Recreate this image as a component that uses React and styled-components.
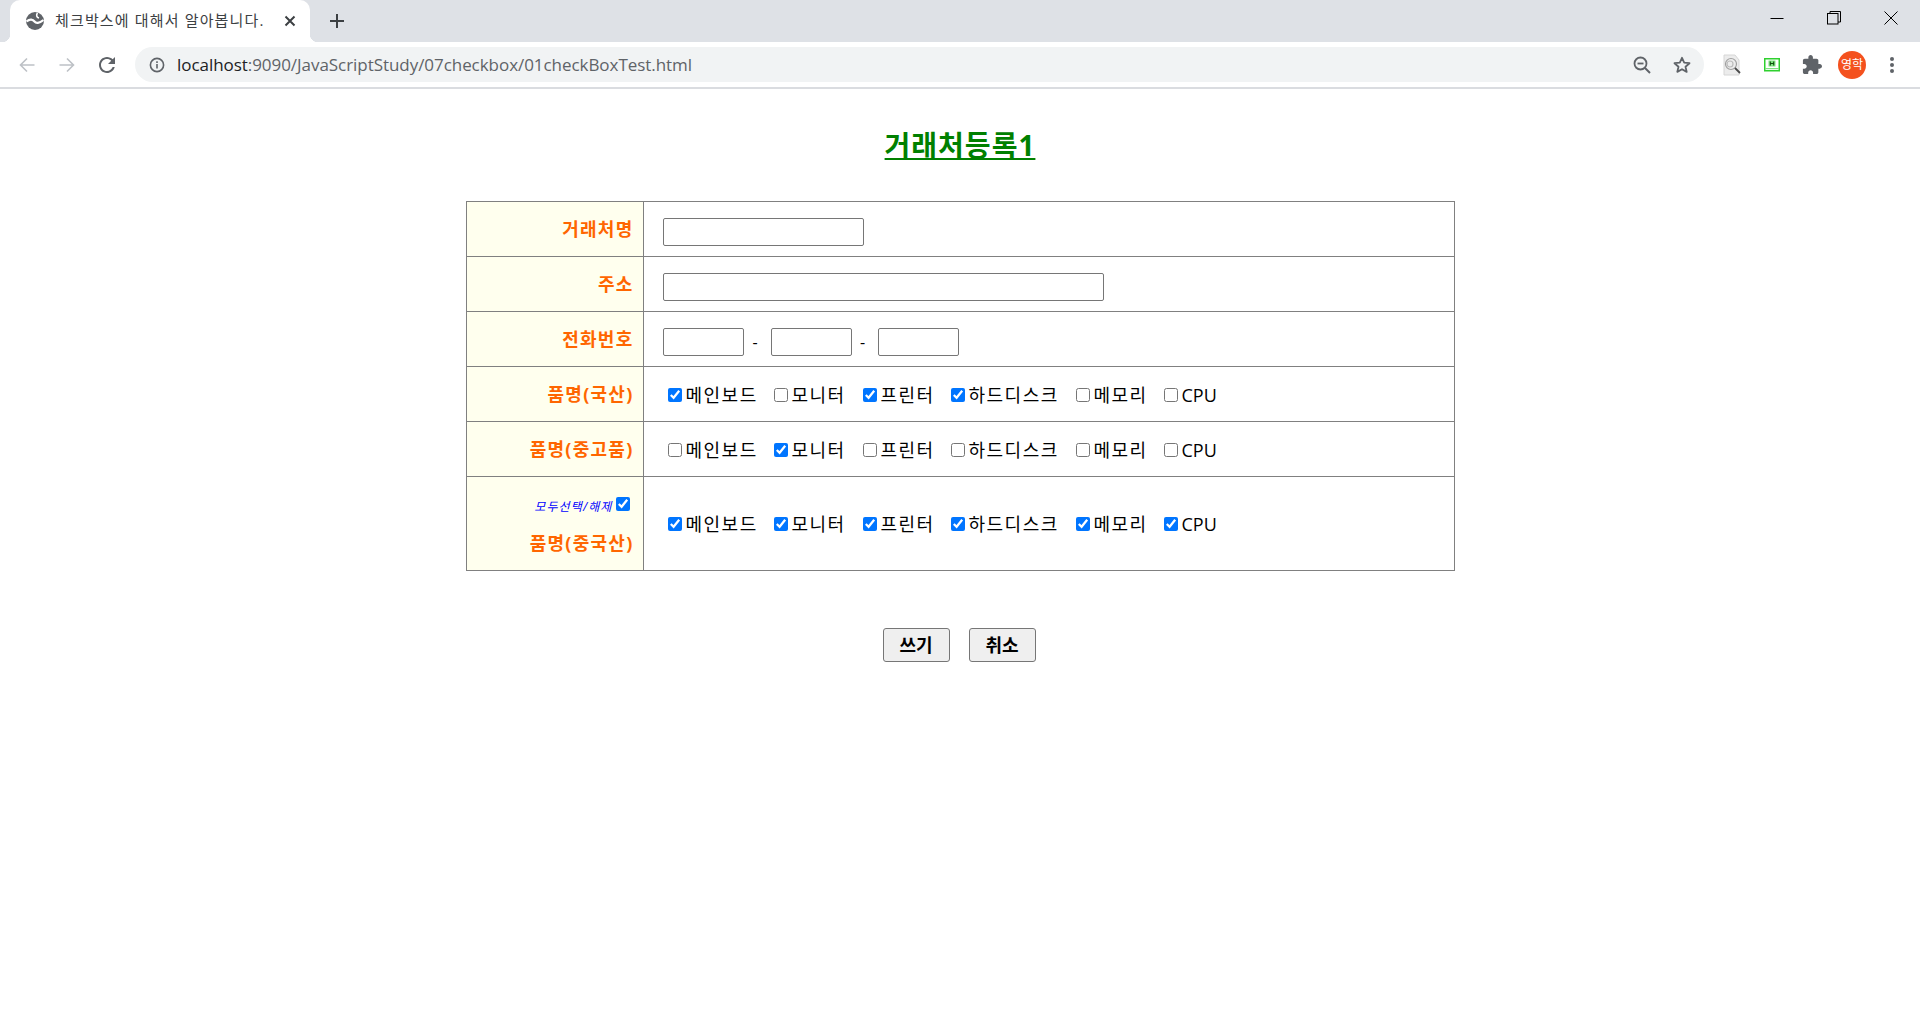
import React from 'react'
import styled, { createGlobalStyle } from 'styled-components'

const FONT = `"Open Sans", "Noto Sans CJK KR", "Liberation Sans", sans-serif`

const GlobalStyle = createGlobalStyle`
  html, body { margin: 0; padding: 0; background: #fff; }
  body { font-family: ${FONT}; color: #000; }
`

const Window = styled.div`
  width: 1920px;
  height: 1030px;
  overflow: hidden;
  background: #fff;
`

const TabStrip = styled.div`
  height: 42px;
  background: #dee1e6;
  display: flex;
  align-items: flex-end;
  padding-left: 10px;
`

const Tab = styled.div`
  position: relative;
  width: 300px;
  height: 42px;
  box-sizing: border-box;
  background: #fff;
  border-radius: 10px 10px 0 0;
  display: flex;
  align-items: center;
  padding: 0 14px 0 16px;

  &::before,
  &::after {
    content: '';
    position: absolute;
    bottom: 0;
    width: 8px;
    height: 8px;
  }
  &::before {
    left: -8px;
    background: radial-gradient(circle at 0 0, #dee1e6 8px, #fff 8.5px);
  }
  &::after {
    right: -8px;
    background: radial-gradient(circle at 100% 0, #dee1e6 8px, #fff 8.5px);
  }
`

const TabTitle = styled.span`
  flex: 1;
  margin: -3px 0 0 11px;
  font-size: 15px;
  letter-spacing: 1.15px;
  color: #3c4043;
  white-space: nowrap;
  overflow: hidden;
`

const NewTab = styled.div`
  width: 20px;
  height: 42px;
  margin-left: 17px;
  display: flex;
  align-items: center;
  justify-content: center;
`

const WindowControls = styled.div`
  margin-left: auto;
  height: 42px;
  padding-right: 1px;
  display: flex;
  align-items: flex-start;
`

const WindowButton = styled.div`
  width: 57px;
  height: 36px;
  display: flex;
  align-items: center;
  justify-content: center;
`

const Toolbar = styled.div`
  height: 45px;
  background: #fff;
  display: flex;
  align-items: center;
  padding: 0 8px 0 7px;
`

const ToolButton = styled.div`
  width: 40px;
  height: 35px;
  flex: none;
  display: flex;
  align-items: center;
  justify-content: center;
`

const AddressBar = styled.div`
  flex: 1;
  height: 35px;
  margin: 0 8px;
  border-radius: 18px;
  background: #f1f3f4;
  display: flex;
  align-items: center;
  padding: 0 2px 0 14px;
`

const UrlText = styled.div`
  flex: 1;
  margin-left: 12px;
  font-size: 17px;
  letter-spacing: -0.05px;
  color: #5f6368;
  white-space: nowrap;
`

const UrlHost = styled.span`
  color: #202124;
`

const Avatar = styled.div`
  width: 28px;
  height: 28px;
  border-radius: 50%;
  background: #f4511e;
  color: #fff;
  font-size: 12px;
  line-height: 28px;
  text-align: center;
`

const ToolbarLine = styled.div`
  height: 2px;
  background: #dadce0;
`

const Page = styled.div`
  padding-top: 41px;
`

const Title = styled.h1`
  margin: 0 0 41px;
  height: 30px;
  font-size: 28px;
  line-height: 30px;
  font-weight: 700;
  letter-spacing: 1px;
  color: #008000;
  text-align: center;
  text-decoration: underline;
`

const Table = styled.table`
  width: 989px;
  margin: 0 auto;
  border-collapse: collapse;
  table-layout: fixed;
  border: 1px solid #808080;
`

const Row = styled.tr`
  height: ${(p) => (p.$tall ? '94px' : '55px')};
`

const LabelCell = styled.th`
  width: 177px;
  box-sizing: border-box;
  padding: 0 9px 2px 0;
  border: 1px solid #808080;
  background: #ffffee;
  color: #ff6600;
  font-size: 18px;
  font-weight: 700;
  letter-spacing: 1.25px;
  text-align: right;
`

const FieldCell = styled.td`
  padding: 6px 0 0 19px;
  border: 1px solid #808080;
  font-size: 18px;
`

const TextInput = styled.input`
  display: block;
  box-sizing: border-box;
  width: ${(p) => p.$w}px;
  height: 28px;
  margin: 0;
  padding: 1px 2px;
  border: 1px solid #767676;
  border-radius: 2px;
  background: #fff;
`

const PhoneRow = styled.div`
  display: flex;
  align-items: center;
`

const Dash = styled.span`
  width: ${(p) => p.$w}px;
  padding-right: 4px;
  box-sizing: border-box;
  text-align: center;
  font-size: 16px;
  color: #000;
`

const CheckRow = styled.div`
  display: flex;
  align-items: center;
  margin-top: -5px;
  padding-left: 5px;
`

const CheckItem = styled.label`
  display: flex;
  align-items: center;
  width: ${(p) => p.$w}px;
  flex: none;
  line-height: 24px;
  letter-spacing: ${(p) => (p.$latin ? '0' : '1.5px')};
  color: #000;
  white-space: nowrap;
`

const Check = styled.input.attrs({ type: 'checkbox' })`
  width: 14px;
  height: 14px;
  margin: 0 4px 0 0;
  flex: none;
  accent-color: #0075ff;
`

const SelectAll = styled.div`
  display: flex;
  justify-content: flex-end;
  align-items: center;
  margin: 7px 4px 15px 0;
  height: 16px;
  font-size: 12px;
  font-weight: 400;
  font-style: italic;
  letter-spacing: 1.1px;
  color: #0000ff;
`

const SelectAllCheck = styled(Check)`
  margin: 0 0 3px 3px;
`

const Actions = styled.div`
  display: flex;
  justify-content: center;
  gap: 19px;
  margin-top: 57px;
  padding-right: 2px;
`

const ActionButton = styled.button`
  width: 67px;
  height: 34px;
  padding: 0 0 2px;
  border: 1px solid #767676;
  border-radius: 3px;
  background: #efefef;
  color: #000;
  font-family: ${FONT};
  font-size: 18px;
  font-weight: 700;
`

const GlobeIcon = () => (
  <svg width="18" height="18" viewBox="0 0 18 18">
    <circle cx="9" cy="9" r="9" fill="#5f6368" />
    <path d="M0.5 9.5C4 6.5 7 7.5 8.5 9.5C10 11.5 13 11.5 17.5 8" fill="none" stroke="#fff" strokeWidth="2.2" />
    <path d="M11.5 1C10 3 10.5 5.5 13 6" fill="none" stroke="#fff" strokeWidth="1.6" />
  </svg>
)

const CloseIcon = () => (
  <svg width="12" height="12" viewBox="0 0 12 12" stroke="#3c4043" strokeWidth="2" fill="none">
    <path d="M1.5 1.5l9 9M10.5 1.5l-9 9" />
  </svg>
)

const PlusIcon = () => (
  <svg width="16" height="16" viewBox="0 0 16 16" stroke="#3c4043" strokeWidth="2" fill="none">
    <path d="M8 1v14M1 8h14" />
  </svg>
)

const ArrowIcon = ({ flip }) => (
  <svg width="18" height="18" viewBox="0 0 18 18" stroke="#bdc1c6" strokeWidth="1.6" fill="none" transform={flip ? 'scale(-1 1)' : undefined}>
    <path d="M16.5 9H2.5M9 2.5L2.5 9 9 15.5" />
  </svg>
)

const ReloadIcon = () => (
  <svg width="24" height="24" viewBox="0 0 24 24" fill="#5f6368">
    <path d="M17.65 6.35C16.2 4.9 14.21 4 12 4c-4.42 0-7.99 3.58-7.99 8s3.57 8 7.99 8c3.73 0 6.84-2.55 7.73-6h-2.08c-.82 2.33-3.04 4-5.65 4-3.31 0-6-2.69-6-6s2.69-6 6-6c1.66 0 3.14.69 4.22 1.78L13 11h7V4l-2.35 2.35z" />
  </svg>
)

const InfoIcon = () => (
  <svg width="16" height="16" viewBox="0 0 16 16" fill="none" stroke="#5f6368" strokeWidth="1.6">
    <circle cx="8" cy="8" r="6.6" />
    <path d="M8 7v4.6" />
    <path d="M8 4.2v1.7" />
  </svg>
)

const ZoomOutIcon = () => (
  <svg width="18" height="18" viewBox="0 0 18 18" fill="none" stroke="#5f6368" strokeWidth="1.8">
    <circle cx="7.5" cy="7.5" r="6" />
    <path d="M12 12l5 5" strokeWidth="2" />
    <path d="M4.5 7.5h6" />
  </svg>
)

const StarIcon = () => (
  <svg width="18" height="18" viewBox="0 0 18 18" fill="none" stroke="#5f6368" strokeWidth="1.8" strokeLinejoin="round">
    <path d="M9 1.8l2.2 4.9 5.3.5-4 3.5 1.2 5.2L9 13.2l-4.7 2.7 1.2-5.2-4-3.5 5.3-.5z" />
  </svg>
)

const ScanExtIcon = () => (
  <svg width="20" height="22" viewBox="0 0 20 22">
    <path d="M2 1h11l4 5v15H2z" fill="#ececec" stroke="#d6d6d6" />
    <circle cx="9" cy="10" r="5.5" fill="none" stroke="#a0a0a0" strokeWidth="1.2" />
    <circle cx="8" cy="10" r="3" fill="none" stroke="#bbb" strokeWidth="1.2" />
    <path d="M13 14l5 5" stroke="#4a4a4a" strokeWidth="1.8" />
  </svg>
)

const MonitorExtIcon = () => (
  <svg width="16" height="14" viewBox="0 0 16 14">
    <rect x="0.75" y="0.75" width="14.5" height="12" fill="#fff" stroke="#2fd02f" strokeWidth="1.5" />
    <rect x="4.5" y="2.5" width="7" height="6" fill="#7fe37f" />
    <path d="M6.3 3.5v4M9.7 3.5v4M6.3 5.5h3.4" stroke="#0f4f0f" strokeWidth="1.1" />
    <rect x="1" y="10" width="14" height="1.2" fill="#7fe37f" />
  </svg>
)

const PuzzleIcon = () => (
  <svg width="20" height="20" viewBox="1 1 22 22" fill="#5f6368">
    <path d="M20.5 11H19V7c0-1.1-.9-2-2-2h-4V3.5C13 2.12 11.88 1 10.5 1S8 2.12 8 3.5V5H4c-1.1 0-1.99.9-1.99 2v3.8H3.5c1.49 0 2.7 1.21 2.7 2.7s-1.21 2.7-2.7 2.7H2V20c0 1.1.9 2 2 2h3.8v-1.5c0-1.49 1.21-2.7 2.7-2.7 1.49 0 2.7 1.21 2.7 2.7V22H17c1.1 0 2-.9 2-2v-4h1.5c1.38 0 2.5-1.12 2.5-2.5S21.88 11 20.5 11z" />
  </svg>
)

const KebabIcon = () => (
  <svg width="6" height="18" viewBox="0 0 6 18" fill="#5f6368">
    <circle cx="3" cy="3" r="2" />
    <circle cx="3" cy="9" r="2" />
    <circle cx="3" cy="15" r="2" />
  </svg>
)

const MinimizeIcon = () => (
  <svg width="14" height="14" viewBox="0 0 14 14" stroke="#000" fill="none">
    <path d="M0.5 7.5h13" />
  </svg>
)

const RestoreIcon = () => (
  <svg width="14" height="14" viewBox="0 0 14 14" stroke="#000" fill="none">
    <rect x="0.5" y="2.5" width="10.5" height="10.5" />
    <path d="M3 2.5V0.5h10.5V11h-2.5" />
  </svg>
)

const WindowCloseIcon = () => (
  <svg width="14" height="14" viewBox="0 0 14 14" stroke="#000" fill="none">
    <path d="M0.5 0.5l13 13M13.5 0.5l-13 13" />
  </svg>
)

const PRODUCTS = [
  { name: '메인보드', w: 106 },
  { name: '모니터', w: 89 },
  { name: '프린터', w: 88 },
  { name: '하드디스크', w: 125 },
  { name: '메모리', w: 88 },
  { name: 'CPU', w: 60, latin: true },
]

function CheckGroup({ checked }) {
  return (
    <CheckRow>
      {PRODUCTS.map((p, i) => (
        <CheckItem key={p.name} $w={p.w} $latin={p.latin}>
          <Check defaultChecked={checked[i]} />
          {p.name}
        </CheckItem>
      ))}
    </CheckRow>
  )
}

function BrowserChrome() {
  return (
    <>
      <TabStrip>
        <Tab>
          <GlobeIcon />
          <TabTitle>체크박스에 대해서 알아봅니다.</TabTitle>
          <CloseIcon />
        </Tab>
        <NewTab>
          <PlusIcon />
        </NewTab>
        <WindowControls>
          <WindowButton><MinimizeIcon /></WindowButton>
          <WindowButton><RestoreIcon /></WindowButton>
          <WindowButton><WindowCloseIcon /></WindowButton>
        </WindowControls>
      </TabStrip>
      <Toolbar>
        <ToolButton><ArrowIcon /></ToolButton>
        <ToolButton><ArrowIcon flip /></ToolButton>
        <ToolButton><ReloadIcon /></ToolButton>
        <AddressBar>
          <InfoIcon />
          <UrlText>
            <UrlHost>localhost</UrlHost>:9090/JavaScriptStudy/07checkbox/01checkBoxTest.html
          </UrlText>
          <ToolButton><ZoomOutIcon /></ToolButton>
          <ToolButton><StarIcon /></ToolButton>
        </AddressBar>
        <ToolButton><ScanExtIcon /></ToolButton>
        <ToolButton><MonitorExtIcon /></ToolButton>
        <ToolButton><PuzzleIcon /></ToolButton>
        <ToolButton><Avatar>영학</Avatar></ToolButton>
        <ToolButton><KebabIcon /></ToolButton>
      </Toolbar>
      <ToolbarLine />
    </>
  )
}

export default function App() {
  return (
    <Window>
      <GlobalStyle />
      <BrowserChrome />
      <Page>
        <Title>거래처등록1</Title>
        <Table>
          <tbody>
            <Row>
              <LabelCell>거래처명</LabelCell>
              <FieldCell><TextInput $w={201} /></FieldCell>
            </Row>
            <Row>
              <LabelCell>주소</LabelCell>
              <FieldCell><TextInput $w={441} /></FieldCell>
            </Row>
            <Row>
              <LabelCell>전화번호</LabelCell>
              <FieldCell>
                <PhoneRow>
                  <TextInput $w={81} />
                  <Dash $w={27}>-</Dash>
                  <TextInput $w={81} />
                  <Dash $w={26}>-</Dash>
                  <TextInput $w={81} />
                </PhoneRow>
              </FieldCell>
            </Row>
            <Row>
              <LabelCell>품명(국산)</LabelCell>
              <FieldCell><CheckGroup checked={[true, false, true, true, false, false]} /></FieldCell>
            </Row>
            <Row>
              <LabelCell>품명(중고품)</LabelCell>
              <FieldCell><CheckGroup checked={[false, true, false, false, false, false]} /></FieldCell>
            </Row>
            <Row $tall>
              <LabelCell>
                <SelectAll>
                  모두선택/해제
                  <SelectAllCheck defaultChecked />
                </SelectAll>
                품명(중국산)
              </LabelCell>
              <FieldCell><CheckGroup checked={[true, true, true, true, true, true]} /></FieldCell>
            </Row>
          </tbody>
        </Table>
        <Actions>
          <ActionButton>쓰기</ActionButton>
          <ActionButton>취소</ActionButton>
        </Actions>
      </Page>
    </Window>
  )
}
